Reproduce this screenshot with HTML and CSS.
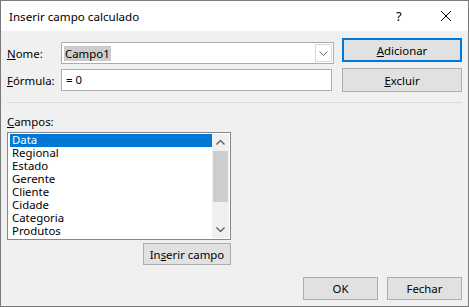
FILE: index.html
```html
<!DOCTYPE html>
<html lang="pt">
<head>
    <meta charset="UTF-8">
    <link rel="stylesheet" href="styles.css">
    <title>Inserir campo calculado</title>
</head>
<body>
    <div class="janela">
        <div class="titulo">
            <span class="titulo_texto">Inserir campo calculado</span>
            <span class="ajuda">?</span>
            <span class="fechar_x">
                <svg width="12" height="12" viewBox="0 0 12 12"><path d="M1 1L11 11M11 1L1 11" stroke="#000" stroke-width="1"/></svg>
            </span>
        </div>
        <div class="corpo">
            <div class="topo">
                <div class="campos_form">
                    <label class="rotulo"><u>N</u>ome:</label>
                    <div class="combo">
                        <span class="combo_valor"><span class="selecionado">Campo1</span></span>
                        <span class="combo_seta">
                            <svg width="9" height="5" viewBox="0 0 9 5"><path d="M0.5 0.5L4.5 4.5L8.5 0.5" stroke="#606060" fill="none"/></svg>
                        </span>
                    </div>
                    <label class="rotulo"><u>F</u>órmula:</label>
                    <div class="entrada">= 0</div>
                </div>
                <div class="botoes_lado">
                    <button class="botao padrao"><u>A</u>dicionar</button>
                    <button class="botao"><u>E</u>xcluir</button>
                </div>
            </div>
            <div class="separador"></div>
            <div class="rotulo campos_titulo"><u>C</u>ampos:</div>
            <div class="lista_area">
                <div class="lista">
                    <ul class="itens">
                        <li class="ativo">Data</li>
                        <li>Regional</li>
                        <li>Estado</li>
                        <li>Gerente</li>
                        <li>Cliente</li>
                        <li>Cidade</li>
                        <li>Categoria</li>
                        <li>Produtos</li>
                    </ul>
                    <div class="rolagem">
                        <span class="seta">
                            <svg width="9" height="5" viewBox="0 0 9 5"><path d="M0.5 4.5L4.5 0.5L8.5 4.5" stroke="#606060" stroke-width="1.4" fill="none"/></svg>
                        </span>
                        <span class="trilho"><span class="polegar"></span></span>
                        <span class="seta">
                            <svg width="9" height="5" viewBox="0 0 9 5"><path d="M0.5 0.5L4.5 4.5L8.5 0.5" stroke="#606060" stroke-width="1.4" fill="none"/></svg>
                        </span>
                    </div>
                </div>
                <button class="botao inserir">In<u>s</u>erir campo</button>
            </div>
            <div class="rodape">
                <button class="botao rodape_btn">OK</button>
                <button class="botao rodape_btn">Fechar</button>
            </div>
        </div>
    </div>
</body>
</html>
```

FILE: styles.css
```css
*{
    margin: 0;
    padding: 0;
    box-sizing: border-box;
}
body{
    background-color: #f0f0f0;
    font-family: "Noto Sans", "Open Sans", sans-serif;
    font-size: 11.4px;
    color: #000;
}
.janela{
    width: 469px;
    height: 307px;
    border: 1px solid #7a7a7a;
    background-color: #f0f0f0;
    display: flex;
    flex-direction: column;
}
.titulo{
    height: 30px;
    background-color: #fff;
    display: flex;
    align-items: center;
    padding-left: 8px;
}
.titulo_texto{
    flex: 1;
    font-size: 11.6px;
}
.ajuda{
    width: 12px;
    margin-right: 32px;
    font-size: 13px;
}
.fechar_x{
    width: 12px;
    height: 12px;
    margin-right: 16px;
    display: flex;
}
.corpo{
    flex: 1;
    padding: 0 6px 0 6px;
}
.topo{
    display: flex;
    padding-top: 7px;
}
.campos_form{
    display: grid;
    grid-template-columns: 54px 273px;
    row-gap: 3px;
    margin-top: 3px;
    align-items: center;
}
.combo{
    height: 22px;
    background-color: #fff;
    border: 1px solid #adadad;
    display: flex;
    align-items: center;
    padding: 1px;
}
.combo_valor{
    flex: 1;
    padding-left: 1px;
}
.selecionado{
    background-color: #cccccc;
    padding: 0 1px;
}
.combo_seta{
    width: 17px;
    height: 18px;
    border: 1px solid #dadada;
    display: flex;
    justify-content: center;
    align-items: center;
}
.entrada{
    height: 22px;
    width: 271px;
    background-color: #fff;
    border: 1px solid #adadad;
    padding-left: 4px;
    line-height: 20px;
}
.botoes_lado{
    margin-left: auto;
    display: flex;
    flex-direction: column;
    gap: 6px;
}
.botao{
    font-family: "Noto Sans", "Open Sans", sans-serif;
    font-size: 11.4px;
    color: #000;
    background-color: #e1e1e1;
    border: 1px solid #adadad;
    width: 120px;
    height: 24px;
}
.padrao{
    border: 2px solid #0078d7;
}
.separador{
    height: 1px;
    background-color: #d8d8d8;
    margin-top: 10px;
}
.campos_titulo{
    margin-top: 11px;
    line-height: 16px;
}
.lista_area{
    width: 224px;
    display: flex;
    flex-direction: column;
    align-items: flex-end;
    margin-top: 2px;
}
.lista{
    width: 224px;
    height: 108px;
    border: 1px solid #828790;
    background-color: #fff;
    display: flex;
    padding: 1px;
}
.itens{
    flex: 1;
    list-style: none;
    padding-left: 1px;
}
.itens li{
    height: 13px;
    line-height: 12px;
    padding-left: 2px;
}
.itens li.ativo{
    background-color: #0078d7;
    color: #fff;
}
.rolagem{
    width: 17px;
    background-color: #f0f0f0;
    display: flex;
    flex-direction: column;
}
.seta{
    height: 17px;
    display: flex;
    justify-content: center;
    align-items: center;
}
.trilho{
    flex: 1;
    padding: 0 1px;
}
.polegar{
    display: block;
    height: 51px;
    background-color: #cdcdcd;
}
.inserir{
    width: 88px;
    height: 22px;
    margin-top: 3px;
}
.rodape{
    display: flex;
    justify-content: flex-end;
    gap: 9px;
    margin-top: 12px;
}
.rodape_btn{
    width: 75px;
    height: 23px;
}
```
